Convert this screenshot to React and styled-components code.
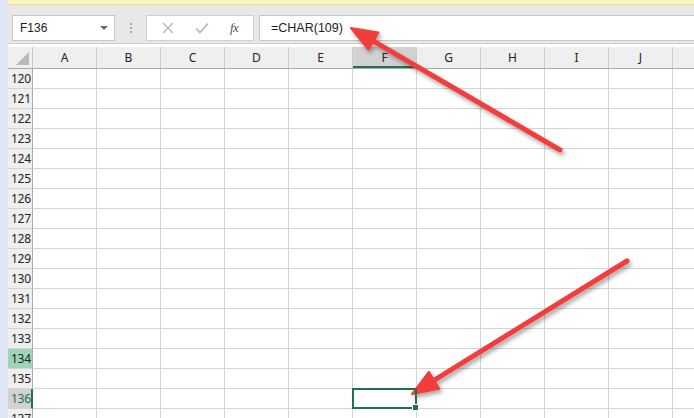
import React from "react";
import styled, { createGlobalStyle } from "styled-components";

const GlobalStyle = createGlobalStyle`
  html, body {
    margin: 0;
    padding: 0;
    background: #ffffff;
    overflow: hidden;
  }
  body {
    font-family: "Noto Sans", "Liberation Sans", sans-serif;
  }
`;

const COLUMNS = ["A", "B", "C", "D", "E", "F", "G", "H", "I", "J", "K"];
const ROWS = Array.from({ length: 18 }, (_, i) => 120 + i);
const SELECTED_COL = "F";
const SELECTED_ROW = 136;
const MARKED_ROW = 134;

const Page = styled.div`
  position: relative;
  display: flex;
  width: 694px;
  height: 418px;
  overflow: hidden;
`;

const SideStrip = styled.div`
  width: 8px;
  flex: none;
  background: #dfe6f3;
`;

const Main = styled.div`
  flex: 1;
  display: flex;
  flex-direction: column;
  min-width: 0;
`;

const InfoBar = styled.div`
  height: 4px;
  flex: none;
  background: #fdf4c2;
  border-bottom: 1px solid #e9df93;
`;

const Toolbar = styled.div`
  height: 39px;
  flex: none;
  box-sizing: border-box;
  display: flex;
  align-items: flex-start;
  padding: 10px 0 0 4px;
  background: #e8e8e8;
  border-bottom: 1px solid #cfcfcf;
  margin-bottom: 3px;
`;

const NameBox = styled.div`
  width: 103px;
  height: 26px;
  box-sizing: border-box;
  display: flex;
  align-items: center;
  justify-content: space-between;
  padding: 0 6px 0 7px;
  background: #ffffff;
  border: 1px solid #c6c6c6;
  font-family: "Liberation Sans", Arial, sans-serif;
  font-size: 12px;
  color: #222;
`;

const DropTriangle = styled.span`
  width: 0;
  height: 0;
  border-left: 4px solid transparent;
  border-right: 4px solid transparent;
  border-top: 4px solid #6b6b6b;
`;

const Grip = styled.div`
  width: 31px;
  height: 26px;
  display: flex;
  flex-direction: column;
  align-items: center;
  justify-content: center;
  gap: 2px;
  span {
    width: 2px;
    height: 2px;
    background: #a8a8a8;
  }
`;

const FuncButtons = styled.div`
  width: 108px;
  height: 26px;
  box-sizing: border-box;
  display: flex;
  align-items: center;
  justify-content: space-around;
  padding: 0 4px;
  background: #ffffff;
  border: 1px solid #d0d0d0;
`;

const FxLabel = styled.span`
  font-family: "Liberation Serif", "Times New Roman", serif;
  font-style: italic;
  font-size: 13px;
  color: #555;
  letter-spacing: -0.5px;
`;

const FormulaInput = styled.div`
  flex: 1;
  height: 26px;
  box-sizing: border-box;
  margin: 0 -2px 0 5px;
  display: flex;
  align-items: center;
  padding-left: 11px;
  background: #ffffff;
  border: 1px solid #c6c6c6;
  font-family: "Liberation Sans", Arial, sans-serif;
  font-size: 12.5px;
  color: #222;
`;

const Sheet = styled.div`
  flex: 1;
  display: flex;
  flex-direction: column;
  background: #ffffff;
`;

const HeaderRow = styled.div`
  display: flex;
  height: 22px;
  flex: none;
  background: #efefef;
  border-bottom: 1px solid #ababab;
  box-sizing: border-box;
`;

const Corner = styled.div`
  position: relative;
  width: 25px;
  flex: none;
  border-right: 1px solid #c8c8c8;
  box-sizing: border-box;
  &::after {
    content: "";
    position: absolute;
    right: 3px;
    bottom: 3px;
    width: 0;
    height: 0;
    border-left: 13px solid transparent;
    border-bottom: 13px solid #b9b9b9;
  }
`;

const ColHead = styled.div`
  width: 64px;
  flex: none;
  box-sizing: border-box;
  display: flex;
  align-items: center;
  justify-content: center;
  font-size: 12px;
  color: #222;
  border-right: 1px solid #cdcdcd;
  background: ${(p) => (p.$active ? "#d2d2d2" : "transparent")};
  border-bottom: ${(p) => (p.$active ? "2px solid #217346" : "0")};
  padding-top: ${(p) => (p.$active ? "2px" : "0")};
`;

const Row = styled.div`
  display: flex;
  height: 20px;
  flex: none;
`;

const RowHead = styled.div`
  width: 25px;
  flex: none;
  box-sizing: border-box;
  display: flex;
  align-items: center;
  justify-content: flex-start;
  padding-left: 3px;
  font-size: 12px;
  letter-spacing: -0.3px;
  background: ${(p) =>
    p.$active ? "#d2d2d2" : p.$marked ? "#9fd5b7" : "#efefef"};
  color: ${(p) => (p.$active ? "#217346" : "#222")};
  border-right: ${(p) =>
    p.$active ? "2px solid #217346" : "1px solid #ababab"};
  border-bottom: 1px solid #d4d4d4;
`;

const Cell = styled.div`
  position: relative;
  width: 64px;
  flex: none;
  box-sizing: border-box;
  border-right: 1px solid #d4d4d4;
  border-bottom: 1px solid #d4d4d4;
  ${(p) =>
    p.$selected &&
    `
    &::before {
      content: "";
      position: absolute;
      left: -1px;
      top: -1px;
      width: 65px;
      height: 21px;
      box-sizing: border-box;
      border: 2px solid #217346;
      z-index: 2;
    }
    &::after {
      content: "";
      position: absolute;
      right: -3px;
      bottom: -3px;
      width: 5px;
      height: 5px;
      background: #217346;
      border: 1px solid #ffffff;
      z-index: 3;
    }
  `}
`;

const Overlay = styled.svg`
  position: absolute;
  left: 0;
  top: 0;
  pointer-events: none;
`;

function arrowHead(tail, tip, len = 26, half = 10) {
  const dx = tip[0] - tail[0];
  const dy = tip[1] - tail[1];
  const d = Math.hypot(dx, dy);
  const ux = dx / d;
  const uy = dy / d;
  const bx = tip[0] - ux * len;
  const by = tip[1] - uy * len;
  const nx = -uy;
  const ny = ux;
  return {
    base: [bx + ux * 4, by + uy * 4],
    points: `${tip[0]},${tip[1]} ${bx + nx * half},${by + ny * half} ${bx - nx * half},${by - ny * half}`,
  };
}

const Arrow = ({ tail, tip }) => {
  const head = arrowHead(tail, tip);
  return (
    <g filter="url(#arrowShadow)">
      <line
        x1={tail[0]}
        y1={tail[1]}
        x2={head.base[0]}
        y2={head.base[1]}
        stroke="#f23d3d"
        strokeWidth="5"
        strokeLinecap="round"
      />
      <polygon points={head.points} fill="#f23d3d" strokeLinejoin="round" stroke="#f23d3d" strokeWidth="2" />
    </g>
  );
};

const CrossIcon = () => (
  <svg width="12" height="12" viewBox="0 0 12 12">
    <path d="M1 1 L11 11 M11 1 L1 11" stroke="#b5b5b5" strokeWidth="1.4" />
  </svg>
);

const CheckIcon = () => (
  <svg width="14" height="12" viewBox="0 0 14 12">
    <path d="M1 6.5 L5 10.5 L13 1.5" stroke="#b5b5b5" strokeWidth="1.6" fill="none" />
  </svg>
);

export default function App() {
  return (
    <>
      <GlobalStyle />
      <Page>
        <SideStrip />
        <Main>
          <InfoBar />
          <Toolbar>
            <NameBox>
              F136
              <DropTriangle />
            </NameBox>
            <Grip>
              <span />
              <span />
              <span />
            </Grip>
            <FuncButtons>
              <CrossIcon />
              <CheckIcon />
              <FxLabel>fx</FxLabel>
            </FuncButtons>
            <FormulaInput>=CHAR(109)</FormulaInput>
          </Toolbar>
          <Sheet>
            <HeaderRow>
              <Corner />
              {COLUMNS.map((c) => (
                <ColHead key={c} $active={c === SELECTED_COL}>
                  {c}
                </ColHead>
              ))}
            </HeaderRow>
            {ROWS.map((r) => (
              <Row key={r}>
                <RowHead $active={r === SELECTED_ROW} $marked={r === MARKED_ROW}>
                  {r}
                </RowHead>
                {COLUMNS.map((c) => (
                  <Cell key={c} $selected={r === SELECTED_ROW && c === SELECTED_COL} />
                ))}
              </Row>
            ))}
          </Sheet>
        </Main>
        <Overlay width="694" height="418">
          <defs>
            <filter id="arrowShadow" x="-20%" y="-20%" width="140%" height="140%">
              <feDropShadow dx="2" dy="3" stdDeviation="2" floodColor="#000" floodOpacity="0.35" />
            </filter>
          </defs>
          <Arrow tail={[560, 150]} tip={[351, 28]} />
          <Arrow tail={[627, 261]} tip={[412, 394]} />
        </Overlay>
      </Page>
    </>
  );
}
